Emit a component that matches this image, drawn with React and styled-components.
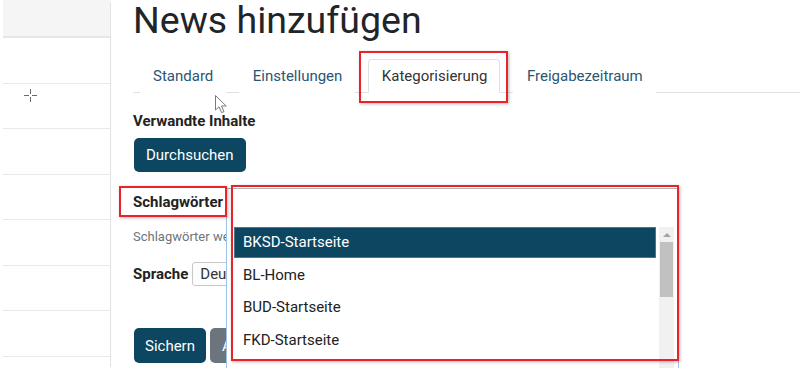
import React from 'react'
import styled, { createGlobalStyle } from 'styled-components'

const GlobalStyle = createGlobalStyle`
  html, body {
    margin: 0;
    padding: 0;
    background: #ffffff;
    font-family: Roboto, "Liberation Sans", Arial, sans-serif;
  }
`

const Page = styled.div`
  position: relative;
  display: flex;
  width: 800px;
  height: 382px;
  overflow: hidden;
`

const Sidebar = styled.div`
  width: 107px;
  height: 367px;
  padding-left: 3px;
  border-right: 1px solid #e2e2e2;
  border-top-right-radius: 4px;
  flex-shrink: 0;
`

const SideHead = styled.div`
  height: 36px;
  background: #f5f5f5;
  border-bottom: 2px solid #e6e6e6;
  border-top-right-radius: 4px;
`

const SideRow = styled.div`
  height: 45.5px;
  box-sizing: border-box;
  border-bottom: 1px solid #e9e9e9;
`

const Main = styled.div`
  flex: 1;
  padding-left: 22px;
`

const Title = styled.h1`
  margin: 0;
  font-size: 37.5px;
  font-weight: 400;
  line-height: 40px;
  color: #212529;
`

const Tabs = styled.div`
  display: flex;
  margin-top: 19px;
  border-bottom: 1px solid #dee2e6;
`

const Tab = styled.div`
  height: 34px;
  box-sizing: border-box;
  display: flex;
  align-items: center;
  padding: 0 12px 0 12.5px;
  margin: 0 6.5px -1px;
  font-size: 15px;
  color: ${p => (p.active ? '#333333' : '#2a5674')};
  border: 1px solid ${p => (p.active ? '#dee2e6' : 'transparent')};
  border-bottom-color: ${p => (p.active ? '#ffffff' : 'transparent')};
  border-radius: 4px 4px 0 0;
  background: #ffffff;
`

const Label = styled.div`
  font-size: 15px;
  font-weight: 700;
  line-height: 20px;
  color: #222222;
  margin-top: ${p => p.top || 0}px;
`

const Button = styled.button`
  height: ${p => p.h || 34}px;
  margin-top: ${p => p.top || 0}px;
  margin-left: 1px;
  padding: 0 ${p => p.px || 12}px;
  border: none;
  border-radius: 5px;
  font-family: Roboto, "Liberation Sans", Arial, sans-serif;
  font-size: 15px;
  color: #ffffff;
  background: ${p => (p.gray ? '#6c757d' : '#0d4661')};
`

const FieldRow = styled.div`
  display: flex;
  align-items: center;
  gap: 4px;
  height: ${p => p.h}px;
  margin-top: ${p => p.top}px;
`

const Help = styled.div`
  margin-top: 11px;
  font-size: 13px;
  line-height: 18px;
  color: #6c757d;
  white-space: nowrap;
`

const Select = styled.div`
  height: 24px;
  box-sizing: border-box;
  display: flex;
  align-items: center;
  padding: 0 7px;
  border: 1px solid #c8c8c8;
  border-radius: 3px;
  font-size: 15px;
  color: #333333;
  background: #fdfdfd;
`

const ButtonRow = styled.div`
  display: flex;
  gap: 3px;
  margin-top: 42px;
`

/* open select2 dropdown, lies over the form */
const Dropdown = styled.div`
  position: absolute;
  left: 226px;
  top: 188px;
  width: 451px;
  height: 179px;
  background: #ffffff;
  border-left: 1px solid #9cc2ec;
  border-right: 1px solid #9cc2ec;
  border-top: 1px solid #b5b5b5;
  display: flex;
  flex-direction: column;
  overflow: hidden;
`

const DropSearch = styled.div`
  height: 37px;
  flex-shrink: 0;
`

const DropList = styled.div`
  flex: 1;
  min-height: 0;
  display: flex;
  padding-left: 8px;
  padding-right: 4px;
  overflow: hidden;
`

const Items = styled.div`
  flex: 1;
  margin-right: 4px;
`

const Item = styled.div`
  height: 32.5px;
  box-sizing: border-box;
  padding: 2px 0;
`

const ItemText = styled.div`
  height: 100%;
  box-sizing: border-box;
  display: flex;
  align-items: center;
  padding-left: 8px;
  font-size: 15px;
  color: ${p => (p.selected ? '#ffffff' : '#222222')};
  background: ${p => (p.selected ? '#0d4661' : 'transparent')};
  outline: ${p => (p.selected ? '1px solid #4f7488' : 'none')};
`

const ScrollTrack = styled.div`
  width: 15px;
  margin-top: 1px;
  background: #f1f1f1;
  display: flex;
  flex-direction: column;
  align-items: center;
`

const ScrollArrow = styled.div`
  margin-top: 6px;
  width: 0;
  height: 0;
  border-left: 4px solid transparent;
  border-right: 4px solid transparent;
  border-bottom: 4px solid #a3a3a3;
`

const ScrollThumb = styled.div`
  width: 13px;
  height: 55px;
  margin-top: 5px;
  background: #c1c1c1;
`

const Marker = styled.div`
  position: absolute;
  left: ${p => p.x}px;
  top: ${p => p.y}px;
  width: ${p => p.w}px;
  height: ${p => p.h}px;
  box-sizing: border-box;
  border: 2px solid #e8242b;
  box-shadow: 1px 1px 3px rgba(0, 0, 0, 0.28);
  pointer-events: none;
`

const Cursor = styled.svg`
  position: absolute;
  left: ${p => p.x}px;
  top: ${p => p.y}px;
`

const tabs = ['Standard', 'Einstellungen', 'Kategorisierung', 'Freigabezeitraum']
const options = ['BKSD-Startseite', 'BL-Home', 'BUD-Startseite', 'FKD-Startseite']

export default function App() {
  return (
    <Page>
      <GlobalStyle />
      <Sidebar>
        <SideHead />
        {[0, 1, 2, 3, 4, 5, 6].map(i => <SideRow key={i} />)}
      </Sidebar>
      <Main>
        <Title>News hinzufügen</Title>
        <Tabs>
          {tabs.map(t => (
            <Tab key={t} active={t === 'Kategorisierung'}>{t}</Tab>
          ))}
        </Tabs>
        <Label top={18}>Verwandte Inhalte</Label>
        <Button top={7}>Durchsuchen</Button>
        <FieldRow h={30} top={15}>
          <Label>Schlagwörter</Label>
        </FieldRow>
        <Help>Schlagwörter werden durch Komma getrennt</Help>
        <FieldRow h={24} top={16}>
          <Label>Sprache</Label>
          <Select>Deutsch</Select>
        </FieldRow>
        <ButtonRow>
          <Button h={35} px={11}>Sichern</Button>
          <Button h={35} gray>Abbrechen</Button>
        </ButtonRow>
      </Main>

      <Dropdown>
        <DropSearch />
        <DropList>
          <Items>
            {options.map((o, i) => (
              <Item key={o}>
                <ItemText selected={i === 0}>{o}</ItemText>
              </Item>
            ))}
          </Items>
          <ScrollTrack>
            <ScrollArrow />
            <ScrollThumb />
          </ScrollTrack>
        </DropList>
      </Dropdown>

      <Marker x={359} y={51} w={149} h={52} />
      <Marker x={119} y={186} w={108} h={31} />
      <Marker x={231} y={185} w={448} h={176} />

      <Cursor x={24} y={89} width="13" height="13" viewBox="0 0 13 13">
        <path d="M6.5 0v5M6.5 8v5M0 6.5h5M8 6.5h5" stroke="#6a6a6a" strokeWidth="1" />
      </Cursor>
      <Cursor x={215} y={95} width="14" height="19" viewBox="0 0 14 19">
        <path d="M0.5 0.5 L0.5 15 L4 11.8 L6.6 17.6 L9 16.6 L6.5 11 L11.2 11 Z" fill="#ffffff" stroke="#7a7a7a" strokeWidth="1" strokeLinejoin="round" />
      </Cursor>
    </Page>
  )
}
